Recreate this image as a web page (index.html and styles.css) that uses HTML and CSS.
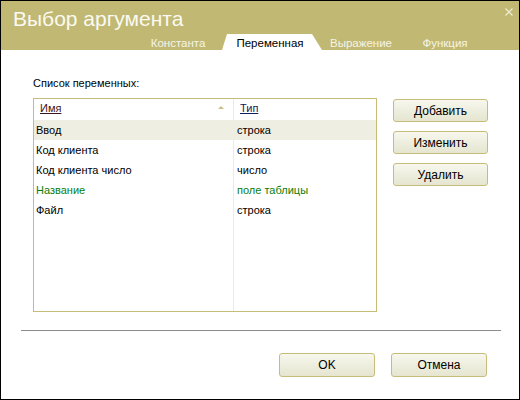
FILE: index.html
```html
<!DOCTYPE html>
<html lang="ru">
<head>
<meta charset="utf-8">
<title>Выбор аргумента</title>
<link rel="stylesheet" href="styles.css">
</head>
<body>
<div class="window">
  <header class="titlebar">
    <div class="title-row">
      <h1 class="title">Выбор аргумента</h1>
      <svg class="close" width="8" height="8" viewBox="0 0 8 8"><path d="M0.5 0.5 L7.5 7.5 M7.5 0.5 L0.5 7.5" stroke="#f2efd9" stroke-width="1.1" fill="none"/></svg>
    </div>
    <nav class="tabs">
      <span class="tab t1">Константа</span>
      <span class="tab t2 active">Переменная</span>
      <span class="tab t3">Выражение</span>
      <span class="tab t4">Функция</span>
    </nav>
  </header>
  <main class="content">
    <div class="label">Список переменных:</div>
    <div class="main-row">
      <div class="list">
        <div class="row head">
          <div class="c1"><span class="h-name">Имя</span><span class="sort"></span></div>
          <div class="c2"><span class="h-type">Тип</span></div>
        </div>
        <div class="row selected"><div class="c1">Ввод</div><div class="c2">строка</div></div>
        <div class="row"><div class="c1">Код клиента</div><div class="c2">строка</div></div>
        <div class="row"><div class="c1">Код клиента число</div><div class="c2">число</div></div>
        <div class="row green"><div class="c1">Название</div><div class="c2">поле таблицы</div></div>
        <div class="row"><div class="c1">Файл</div><div class="c2">строка</div></div>
      </div>
      <div class="side-buttons">
        <button class="btn">Добавить</button>
        <button class="btn">Изменить</button>
        <button class="btn">Удалить</button>
      </div>
    </div>
    <div class="sep"></div>
    <div class="footer">
      <button class="btn wide">OK</button>
      <button class="btn wide">Отмена</button>
    </div>
  </main>
</div>
</body>
</html>
```
FILE: styles.css
```css
html, body {
  margin: 0;
  padding: 0;
  background: #ffffff;
}
.window {
  width: 520px;
  height: 400px;
  box-sizing: border-box;
  border: 1px solid #000;
  background: #fff;
  font-family: "Liberation Sans", Arial, sans-serif;
  display: flex;
  flex-direction: column;
}
.titlebar {
  height: 49px;
  background: #c1b973;
  display: flex;
  flex-direction: column;
}
.title-row {
  height: 33px;
  display: flex;
  justify-content: space-between;
  align-items: flex-start;
}
.title {
  margin: 0;
  padding: 8px 0 0 12px;
  font-size: 21px;
  line-height: 20px;
  font-weight: normal;
  color: #fbfaf2;
}
.close {
  margin: 7px 6px 0 0;
}
.tabs {
  height: 16px;
  display: flex;
  padding-left: 137px;
}
.tab {
  font-size: 11.5px;
  line-height: 16px;
  padding-top: 1px;
  color: #f6f4e6;
  text-align: center;
  box-sizing: border-box;
}
.t1 { width: 84px; padding-right: 4px; }
.t2 { width: 100px; padding-right: 4px; }
.t3 { width: 78px; }
.t4 { width: 90px; }
.tab.active {
  background: #fff;
  color: #000;
  clip-path: polygon(5px 0, 90px 0, 100px 100%, 0 100%);
}
.content {
  flex: 1;
  padding: 27px 18px 0 20px;
  display: flex;
  flex-direction: column;
}
.label {
  margin-left: 12px;
  font-size: 11px;
  line-height: 13px;
  color: #000;
}
.main-row {
  margin-top: 8px;
  margin-left: 12px;
  display: flex;
}
.list {
  width: 344px;
  height: 214px;
  box-sizing: border-box;
  border: 1px solid #c7bd78;
  background: linear-gradient(to right, transparent 199px, #ecebdf 199px, #ecebdf 200px, transparent 200px);
  font-size: 11px;
}
.row {
  display: flex;
  height: 20px;
  line-height: 20px;
  color: #000;
}
.row .c1 {
  width: 199px;
  margin-right: 1px;
  padding-left: 2px;
  box-sizing: border-box;
}
.row .c2 {
  padding-left: 3px;
}
.row.head {
  height: 21px;
  line-height: 19px;
}
.row.head .c1 {
  padding-left: 6px;
  padding-right: 9px;
  display: flex;
  justify-content: space-between;
  align-items: flex-start;
}
.row.head .c2 {
  padding-left: 6px;
}
.h-name {
  color: #3b1420;
  text-decoration: underline;
}
.h-type {
  color: #12205e;
  text-decoration: underline;
}
.sort {
  width: 0;
  height: 0;
  margin-top: 7px;
  border-left: 3px solid transparent;
  border-right: 3px solid transparent;
  border-bottom: 3px solid #c9c08c;
}
.row.selected {
  background: #efeee3;
}
.row.green {
  color: #0a7d0a;
}
.side-buttons {
  margin-left: 16px;
  margin-top: 1px;
  display: flex;
  flex-direction: column;
  gap: 9px;
}
.btn {
  width: 95px;
  height: 23px;
  box-sizing: border-box;
  border: 1px solid #c7bd7a;
  border-radius: 3px;
  background: linear-gradient(#f7f7ee, #e5e5d0);
  font-family: "Liberation Sans", Arial, sans-serif;
  font-size: 12px;
  color: #000;
  padding: 0;
  margin: 0;
}
.btn.wide {
  width: 96px;
  height: 24px;
}
.sep {
  margin-top: 18px;
  height: 1px;
  background: #8c8c8c;
}
.footer {
  margin-top: 22px;
  display: flex;
  justify-content: flex-end;
  gap: 16px;
  padding-right: 14px;
}
```
